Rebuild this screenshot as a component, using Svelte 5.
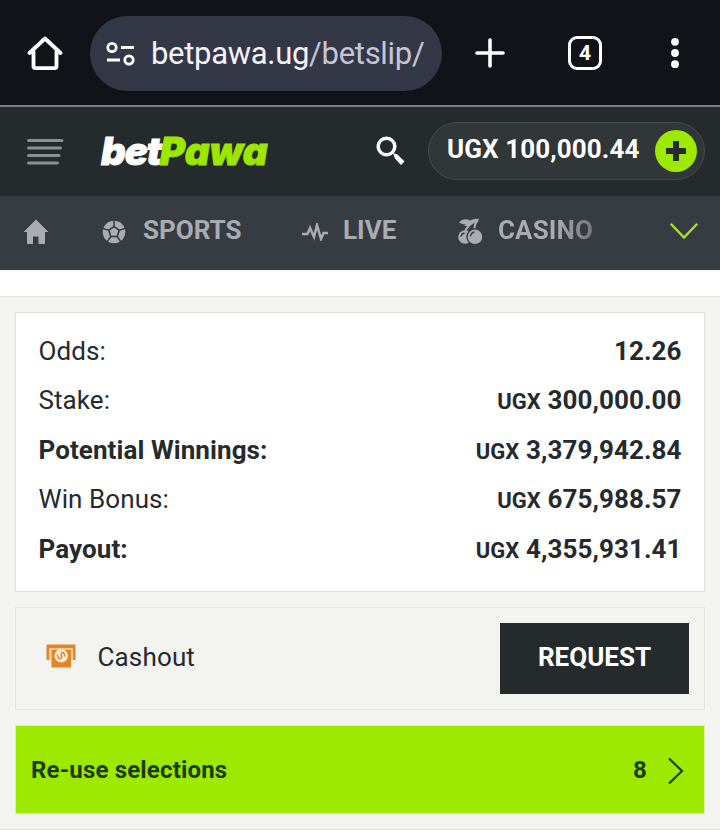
<script lang="ts">
  let balance = $state("UGX 100,000.44");
  let selections = $state(8);

  const rows = [
    { label: "Odds:", value: "12.26" },
    { label: "Stake:", currency: "UGX", value: "300,000.00" },
    { label: "Potential Winnings:", currency: "UGX", value: "3,379,942.84", strong: true },
    { label: "Win Bonus:", currency: "UGX", value: "675,988.57" },
    { label: "Payout:", currency: "UGX", value: "4,355,931.41", strong: true },
  ];
</script>

<div class="screen">
  <div class="browser">
    <svg class="home" width="36" height="36" viewBox="0 0 36 36">
      <path d="M2.500 18 18 3.500 33.500 18M6.500 16V31.700a1.500 1.500 0 0 0 1.500 1.500H28a1.500 1.500 0 0 0 1.500-1.500V16" />
    </svg>
    <div class="address">
      <svg width="30" height="26" viewBox="0 0 30 26">
        <circle cx="6" cy="6.500" r="4.200" />
        <path d="M15 6.500h13M1 19h13" />
        <circle cx="23" cy="19" r="4.200" />
      </svg>
      <span class="url">betpawa.ug<span class="path">/betslip/</span></span>
    </div>
    <svg class="new-tab" width="30" height="30" viewBox="0 0 30 30">
      <path d="M15 2v26M2 15h26" />
    </svg>
    <div class="tabs">4</div>
    <svg class="dots" width="8" height="32" viewBox="0 0 8 32">
      <circle cx="4" cy="4.800" r="3.900" />
      <circle cx="4" cy="16" r="3.900" />
      <circle cx="4" cy="27.200" r="3.900" />
    </svg>
  </div>

  <header>
    <svg class="burger" width="37" height="28" viewBox="0 0 37 28">
      <path d="M1.500 2.500h33.500M1.500 10h32M1.500 17.500h30.500M1.500 25h29" />
    </svg>
    <div class="logo"><span>bet</span><span class="pawa">Pawa</span></div>
    <svg class="search" width="30" height="30" viewBox="0 0 30 30">
      <circle cx="10.500" cy="10.500" r="8.300" />
      <path d="M17 17l4.500 1.500 7 7-3.500 3.500-6-6.500z" />
    </svg>
    <div class="balance">
      <span>{balance}</span>
      <button class="deposit" aria-label="Deposit">
        <svg width="20" height="20" viewBox="0 0 20 20"><path d="M10 0v20M0 10h20" /></svg>
      </button>
    </div>
  </header>

  <nav>
    <svg class="nav-home" width="26" height="26" viewBox="0 0 26 26">
      <path d="M13 .5 25.500 13H22v12h-6.500v-7.500h-5.500V25H4V13H.5z" />
    </svg>
    <svg class="ball" width="24" height="24" viewBox="0 0 24 24">
      <circle cx="12" cy="12" r="11.300" />
      <path d="M12 7.500V0M7.700 10.600.5 8.300M9.400 15.700 5 22M14.600 15.700 19 22M16.300 10.600l7.200-2.300" />
      <path class="ring" d="M12 5.500 18.200 10 15.800 17.300H8.200L5.800 10z" />
      <path class="patch" d="M12 7.500 16.200 10.600 14.700 15.700H9.300L7.800 10.600z" />
    </svg>
    <span class="item sports">SPORTS</span>
    <svg class="pulse" width="26" height="18" viewBox="0 0 26 18">
      <path d="M0 11h5.500L8 5l4 9L15 2l4 14 2.500-6H26" />
    </svg>
    <span class="item live">LIVE</span>
    <svg class="cherry" width="25" height="27" viewBox="0 0 25 27">
      <path class="stem" d="M20 2C14 4 8 9 6.500 15M20 2c-4 4-4 8-3 12" />
      <path d="M1 4.500C4 1 8 .5 12 2.500 16 .5 19 .5 22 1c-3 1.500-6 2.500-8 3.500-1.500 3-4 4-7.500 3.500l1-1.500C5 6.500 3 5.500 1 4.500z" />
      <circle cx="7" cy="19" r="6.800" />
      <circle class="front" cx="17" cy="18.800" r="8" />
      <path class="shine" d="M3 18.500q.5-3 3.500-3.500M12.500 18.500q.5-4 4-4.500" />
    </svg>
    <span class="item casino">CASINO</span>
    <svg class="expand" width="28" height="17" viewBox="0 0 28 17"><path d="M1.500 1.500 14 14.500 26.500 1.500" /></svg>
  </nav>

  <main>
    <section class="summary">
      {#each rows as row}
        <div class="row">
          <span class:strong={row.strong}>{row.label}</span>
          <span class="value">
            {#if row.currency}<small>{row.currency}</small>{/if}
            {row.value}
          </span>
        </div>
      {/each}
    </section>

    <section class="cashout">
      <svg width="30" height="24" viewBox="0 0 30 24">
        <path d="M.5.500h29v15.500h-4V6h-21v10h-4z" />
        <path class="gap" d="M3.800 16V5H26.200v11" />
        <path d="M5.500 5.800h19.500v17.700h-19.500z" />
        <circle cx="15.200" cy="11.800" r="6.800" />
        <path class="dollar" d="M18.200 9.800c-.5-1.700-3-1.700-3 .2 0 1.200.4 1.800.4 3 0 2.200-3 2.200-3.600.4M11 10.500l1.800 4M17.500 8.500l1.800 4" />
      </svg>
      <span>Cashout</span>
      <button>REQUEST</button>
    </section>

    <button class="reuse">
      <span>Re-use selections</span>
      <span class="count">{selections}</span>
      <svg width="17" height="28" viewBox="0 0 17 28"><path d="M2 1.500 15 14 2 26.500" /></svg>
    </button>
  </main>
</div>

<style>
  :global(body) {
    background: #fff;
  }
  .screen {
    width: 720px;
    height: 840px;
    overflow: hidden;
    background: #fff;
    color: #252a2d;
    font-family: Roboto, "Liberation Sans", sans-serif;
    font-size: 26px;
  }
  svg {
    display: block;
    flex: none;
    fill: none;
  }
  button {
    border: 0;
    padding: 0;
    font: inherit;
    color: inherit;
  }
  .browser {
    display: flex;
    align-items: center;
    box-sizing: border-box;
    height: 107px;
    padding: 1px 0 0 27px;
    background: #111318;
    border-bottom: 2px solid #7b7c84;
    stroke: #fff;
    stroke-width: 3.5;
  }
  .home {
    stroke-linejoin: round;
    stroke-linecap: round;
    stroke-width: 3.8;
  }
  .address {
    display: flex;
    align-items: center;
    box-sizing: border-box;
    width: 352px;
    height: 75px;
    margin: 1px 0 0 27px;
    padding-left: 16px;
    border-radius: 38px;
    background: #343746;
  }
  .address svg {
    stroke-width: 2.8;
  }
  .url {
    margin-left: 15px;
    color: #f4f3fb;
    font-size: 31px;
    line-height: 36px;
    letter-spacing: -0.3px;
    white-space: nowrap;
    stroke: none;
  }
  .path {
    color: #c5c6d5;
  }
  .new-tab {
    margin-left: 33px;
    stroke-width: 3.6;
    stroke-linecap: round;
  }
  .tabs {
    box-sizing: border-box;
    width: 34px;
    height: 34px;
    margin-left: 63px;
    border: 3.5px solid #fff;
    border-radius: 9px;
    color: #fff;
    font-size: 21px;
    font-weight: 700;
    line-height: 28px;
    text-align: center;
  }
  .dots {
    margin-left: 69px;
    fill: #fff;
    stroke: none;
  }
  header {
    display: flex;
    align-items: center;
    height: 89px;
    padding-left: 27px;
    background: #252a2d;
  }
  .burger {
    stroke: #8c9092;
    stroke-width: 3;
    stroke-linecap: round;
  }
  .logo {
    width: 170px;
    margin: -2px 0 0 37px;
    color: #fff;
    font-family: Inter, sans-serif;
    font-size: 38.5px;
    font-style: italic;
    font-weight: 900;
    letter-spacing: -1.2px;
    line-height: 44px;
    white-space: nowrap;
    -webkit-text-stroke: 0.8px currentColor;
  }
  .pawa {
    margin-left: -1px;
    color: #9de600;
    letter-spacing: 0;
  }
  .search {
    margin: -1px 0 0 105px;
    stroke: #fff;
    stroke-width: 3.5;
  }
  .search path {
    fill: #fff;
    stroke: none;
  }
  .balance {
    display: flex;
    align-items: center;
    justify-content: space-between;
    box-sizing: border-box;
    width: 277px;
    height: 58px;
    margin: -1px 0 0 22px;
    padding: 0 7px 0 18px;
    border: 1px solid #464b4d;
    border-radius: 29px;
    background: #313638;
    color: #fff;
    font-weight: 700;
    letter-spacing: 0.1px;
  }
  .balance span {
    margin-top: -4px;
  }
  .deposit {
    display: grid;
    place-items: center;
    width: 42px;
    height: 42px;
    border-radius: 50%;
    background: #9dea00;
    stroke: #252a2d;
    stroke-width: 6;
  }
  nav {
    display: flex;
    align-items: center;
    box-sizing: border-box;
    height: 74px;
    padding: 0 0 3px 23px;
    background: #373b42;
    color: #a9acb0;
    font-weight: 700;
  }
  nav svg {
    fill: #a9acb0;
  }
  .item {
    margin-top: -4px;
    line-height: 30px;
    white-space: nowrap;
  }
  .ball {
    margin-left: 53px;
    stroke: #373b42;
    stroke-width: 1.5;
  }
  .ball circle,
  .ball .patch {
    stroke: none;
  }
  .ball .ring {
    stroke-width: 0;
    fill: #373b42;
  }
  .sports {
    width: 100px;
    margin-left: 17px;
  }
  nav .pulse {
    margin-left: 59px;
    fill: none;
    stroke: #a9acb0;
    stroke-width: 2.5;
  }
  .live {
    width: 54px;
    margin-left: 15px;
  }
  .cherry {
    margin-left: 61px;
  }
  nav .stem,
  nav .shine {
    fill: none;
    stroke: #a9acb0;
    stroke-width: 2.2;
  }
  nav .shine {
    stroke: #373b42;
    stroke-width: 1.3;
  }
  .front {
    stroke: #373b42;
    stroke-width: 1.4;
  }
  .casino {
    width: 96px;
    margin-left: 15px;
    background: linear-gradient(90deg, #a9acb0 60%, #73777c);
    background-clip: text;
    color: transparent;
    letter-spacing: 0.1px;
  }
  nav .expand {
    margin-left: 76px;
    fill: none;
    stroke: #a0e529;
    stroke-width: 2.5;
    stroke-linecap: round;
  }
  main {
    display: flex;
    flex-direction: column;
    gap: 15px;
    box-sizing: border-box;
    height: 534px;
    margin-top: 26px;
    padding: 15px 15px 0;
    border-top: 1px solid #e0e1dd;
    border-bottom: 1px solid #e0e1dd;
    background: #f3f4ef;
  }
  .summary {
    box-sizing: border-box;
    height: 280px;
    padding: 13px 22.5px 0;
    border: 1px solid #e1e2df;
    background: #fff;
  }
  .row {
    display: flex;
    align-items: center;
    justify-content: space-between;
    height: 49.5px;
    letter-spacing: 0.08px;
  }
  .strong {
    font-weight: 700;
  }
  .value {
    font-weight: 700;
  }
  small {
    font-size: 22px;
  }
  .cashout {
    display: flex;
    align-items: center;
    box-sizing: border-box;
    height: 103px;
    padding: 0 15px 0 30px;
    border: 1px solid #e3e4e0;
  }
  .cashout svg {
    margin-top: -5px;
    fill: #e58423;
  }
  .cashout .gap {
    fill: none;
    stroke: #f7e3c8;
    stroke-width: 1.3;
  }
  .cashout circle {
    fill: #faebd5;
  }
  .cashout .dollar {
    fill: none;
    stroke: #d98a3a;
    stroke-width: 1.5;
  }
  .cashout span {
    margin: -3px 0 0 21.5px;
    letter-spacing: 0.15px;
  }
  .cashout button {
    width: 189px;
    height: 71px;
    margin-left: auto;
    padding-bottom: 3px;
    background: #252a2d;
    color: #fff;
    font-weight: 700;
  }
  .reuse {
    display: flex;
    align-items: center;
    box-sizing: border-box;
    height: 89px;
    padding: 0 20px 0 15px;
    border: 1px solid #dcefad;
    background: #9dea00;
    color: #1e3b0c;
    font-size: 24px;
    font-weight: 700;
    letter-spacing: 0.17px;
  }
  .count {
    margin-left: auto;
  }
  .reuse svg {
    margin: 2px 0 0 20px;
    stroke: #214108;
    stroke-width: 2.2;
  }
</style>
